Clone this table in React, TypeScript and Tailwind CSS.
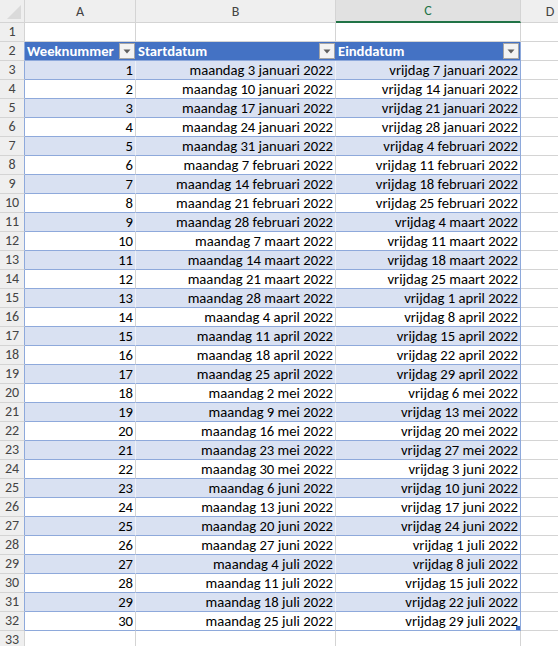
import React from "react";

const months = ["januari","februari","maart","april","mei","juni","juli","augustus","september","oktober","november","december"];

function fmt(d: Date, day: string) {
  return `${day} ${d.getUTCDate()} ${months[d.getUTCMonth()]} ${d.getUTCFullYear()}`;
}

const rows = Array.from({ length: 30 }, (_, i) => {
  const s = new Date(Date.UTC(2022, 0, 3 + 7 * i));
  const e = new Date(Date.UTC(2022, 0, 7 + 7 * i));
  return { n: i + 1, start: fmt(s, "maandag"), end: fmt(e, "vrijdag") };
});

const font = { fontFamily: "Carlito, Calibri, Lato, 'Open Sans', sans-serif" };

function Drop() {
  return (
    <div className="w-[16px] h-[16px] bg-[#f3f3f3] border border-[#a6a6a6] flex items-center justify-center shrink-0">
      <svg width="8" height="5" viewBox="0 0 8 5"><path d="M0.5 0.5 L7.5 0.5 L4 4.5 Z" fill="#5f5f5f" /></svg>
    </div>
  );
}

function RowHead({ n, blue, h = "h-[19px]" }: { n: number; blue?: boolean; h?: string }) {
  return (
    <div className={`w-[25px] ${h} shrink-0 bg-[#efefef] border-b border-r border-[#d4d4d4] ${blue ? "border-r-[#8ea9db]" : ""} flex items-center justify-center text-[14px] text-[#444444] leading-none`}>
      {n}
    </div>
  );
}

export default function App() {
  return (
    <div className="w-[558px] h-[646px] overflow-hidden bg-white text-black" style={font}>
      {/* column headers */}
      <div className="flex h-[23px]">
        <div className="w-[25px] shrink-0 bg-[#efefef] border-b border-r border-[#d4d4d4] relative">
          <svg className="absolute right-[3px] bottom-[3px]" width="14" height="14" viewBox="0 0 14 14"><path d="M14 0 L14 14 L0 14 Z" fill="#dadada" /></svg>
        </div>
        <div className="w-[111px] shrink-0 bg-[#efefef] border-b border-r border-[#d4d4d4] flex items-center justify-center text-[14px] text-[#444444]">A</div>
        <div className="w-[200px] shrink-0 bg-[#efefef] border-b border-r border-[#d4d4d4] flex items-center justify-center text-[14px] text-[#444444]">B</div>
        <div className="w-[185px] shrink-0 bg-[#e1e1e1] border-b-2 border-b-[#217346] border-r border-r-[#d4d4d4] flex items-center justify-center text-[14px] text-[#217346]">C</div>
        <div className="w-[58px] shrink-0 bg-[#efefef] border-b border-[#d4d4d4] flex items-center justify-center text-[14px] text-[#444444]">D</div>
      </div>
      {/* row 1 */}
      <div className="flex h-[19px]">
        <RowHead n={1} />
        <div className="w-[111px] shrink-0 border-b border-r border-[#d4d4d4]" />
        <div className="w-[200px] shrink-0 border-b border-r border-[#d4d4d4]" />
        <div className="w-[185px] shrink-0 border-b border-r border-[#d4d4d4]" />
        <div className="w-[58px] shrink-0 border-b border-[#d4d4d4]" />
      </div>
      {/* table header row 2 */}
      <div className="flex h-[19px]">
        <RowHead n={2} blue />
        <div className="w-[111px] shrink-0 bg-[#4472c4] border-b border-[#8ea9db] flex items-center justify-between pl-[2px] pr-[1px] text-white font-bold text-[14.67px] leading-none">
          <span>Weeknummer</span>
          <Drop />
        </div>
        <div className="w-[200px] shrink-0 bg-[#4472c4] border-b border-[#8ea9db] flex items-center justify-between pl-[2px] pr-[1px] text-white font-bold text-[14.67px] leading-none">
          <span>Startdatum</span>
          <Drop />
        </div>
        <div className="w-[185px] shrink-0 bg-[#4472c4] border-b border-r border-[#8ea9db] flex items-center justify-between pl-[2px] pr-[1px] text-white font-bold text-[14.67px] leading-none">
          <span>Einddatum</span>
          <Drop />
        </div>
        <div className="w-[58px] shrink-0 border-b border-[#d4d4d4]" />
      </div>
      {rows.map((r, i) => {
        const band = i % 2 === 0;
        const bg = band ? "bg-[#d9e1f2]" : "bg-white";
        const vline = band ? "border-r-[#eef1f8]" : "border-r-[#d4d4d4]";
        const last = i === rows.length - 1;
        return (
          <div key={r.n} className="flex h-[19px]">
            <RowHead n={r.n + 2} blue />
            <div className={`w-[111px] shrink-0 ${bg} border-b border-r border-b-[#8ea9db] ${vline} flex items-center justify-end pr-[2px] text-[14.67px] leading-none`}>{r.n}</div>
            <div className={`w-[200px] shrink-0 ${bg} border-b border-r border-b-[#8ea9db] ${vline} flex items-center justify-end pr-[2px] text-[14.67px] leading-none`}>{r.start}</div>
            <div className={`w-[185px] shrink-0 ${bg} border-b border-r border-[#8ea9db] flex items-center justify-end pr-[2px] text-[14.67px] leading-none relative`}>
              {r.end}
              {last && <div className="absolute right-0 bottom-0 w-[4px] h-[4px] bg-[#4472c4]" />}
            </div>
            <div className="w-[58px] shrink-0 border-b border-[#d4d4d4]" />
          </div>
        );
      })}
      {/* row 33 */}
      <div className="flex h-[19px]">
        <RowHead n={33} />
        <div className="w-[111px] shrink-0 border-b border-r border-[#d4d4d4]" />
        <div className="w-[200px] shrink-0 border-b border-r border-[#d4d4d4]" />
        <div className="w-[185px] shrink-0 border-b border-r border-[#d4d4d4]" />
        <div className="w-[58px] shrink-0 border-b border-[#d4d4d4]" />
      </div>
    </div>
  );
}
